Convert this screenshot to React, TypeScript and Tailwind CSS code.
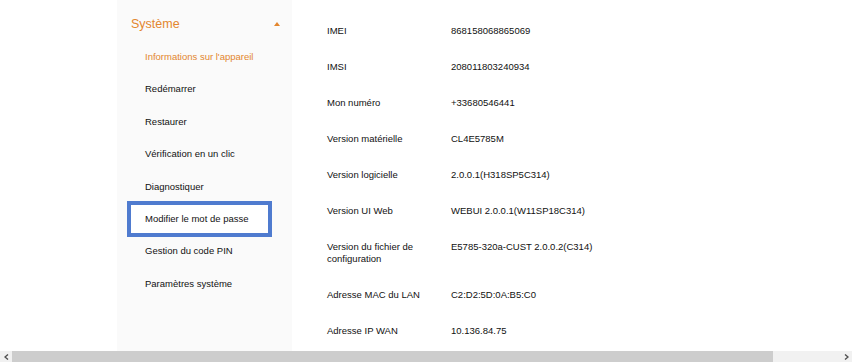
const menu = [
  'Informations sur l\'appareil',
  'Redémarrer',
  'Restaurer',
  'Vérification en un clic',
  'Diagnostiquer',
  'Modifier le mot de passe',
  'Gestion du code PIN',
  'Paramètres système',
];

const rows: [string, string][] = [
  ['IMEI', '868158068865069'],
  ['IMSI', '208011803240934'],
  ['Mon numéro', '+33680546441'],
  ['Version matérielle', 'CL4E5785M'],
  ['Version logicielle', '2.0.0.1(H318SP5C314)'],
  ['Version UI Web', 'WEBUI 2.0.0.1(W11SP18C314)'],
  ['Version du fichier de configuration', 'E5785-320a-CUST 2.0.0.2(C314)'],
  ['Adresse MAC du LAN', 'C2:D2:5D:0A:B5:C0'],
  ['Adresse IP WAN', '10.136.84.75'],
];

function Sidebar() {
  return (
    <aside className="w-[175px] shrink-0 bg-[#fafafa]">
      <div className="flex items-center justify-between pl-[14px] pr-[12px] pt-[16px] h-[32px] leading-[16px]">
        <span className="text-[12.5px] text-[#e3862e]">Système</span>
        <svg width="6" height="4" viewBox="0 0 6 4" className="mb-[1px]">
          <path d="M0 4 L3 0 L6 4 Z" fill="#e3862e" />
        </svg>
      </div>
      <ul className="mt-[9px] pl-[12px] pr-[22px]">
        {menu.map((item, i) => (
          <li
            key={item}
            className={`flex h-[32.4px] items-center pl-[16px] text-[9.5px] ${
              i === 0 ? 'text-[#e3862e]' : 'text-[#111]'
            } ${i === 5 ? 'outline-4 outline-[#4f7bcf] -outline-offset-2 bg-white' : ''}`}
          >
            {item}
          </li>
        ))}
      </ul>
    </aside>
  );
}

function InfoTable() {
  return (
    <section className="flex-1 pl-[35px] pt-[13px]">
      {rows.map(([label, value]) => (
        <div key={label} className="flex py-[12px] text-[9.5px] leading-[12px] text-[#111]">
          <div className="w-[112px] pr-[4px]">{label}</div>
          <div className="ml-[12px]">{value}</div>
        </div>
      ))}
    </section>
  );
}

function Scrollbar() {
  return (
    <div className="flex h-[11px] items-stretch bg-[#f1f1f1]">
      <div className="flex w-[12px] items-center justify-center">
        <svg width="5" height="6" viewBox="0 0 5 6">
          <path d="M4 0.5 L1 3 L4 5.5" stroke="#505050" strokeWidth="1.4" fill="none" />
        </svg>
      </div>
      <div className="w-[761px] bg-[#cdcdcd]" />
      <div className="flex-1" />
      <div className="flex w-[12px] items-center justify-center">
        <svg width="5" height="6" viewBox="0 0 5 6">
          <path d="M1 0.5 L4 3 L1 5.5" stroke="#505050" strokeWidth="1.4" fill="none" />
        </svg>
      </div>
    </div>
  );
}

export default function App() {
  return (
    <div className="flex h-[362px] w-[852px] flex-col overflow-hidden bg-white font-['Liberation_Sans',Arial,sans-serif]">
      <div className="flex h-[351px]">
        <div className="w-[117px] shrink-0" />
        <Sidebar />
        <InfoTable />
      </div>
      <Scrollbar />
    </div>
  );
}
